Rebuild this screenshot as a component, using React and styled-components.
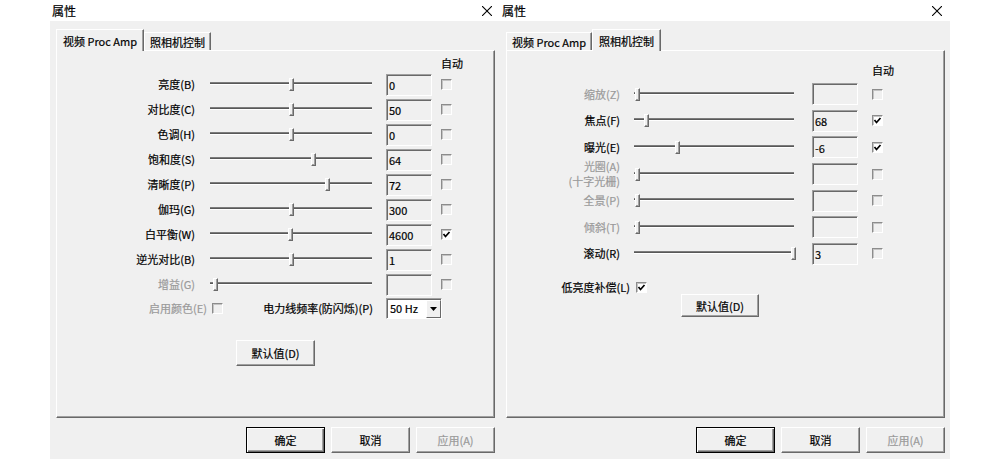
import React from "react";
import styled, { createGlobalStyle } from "styled-components";

const GlobalStyle = createGlobalStyle`
  html, body {
    margin: 0;
    padding: 0;
    background: #fff;
  }
  body {
    font-family: "Noto Sans CJK SC", "Noto Sans", sans-serif;
    font-size: 11px;
    color: #000;
    -webkit-text-stroke: 0.2px currentColor;
  }
`;

const FACE = "#f0f0f0",
  SHADOW = "#a0a0a0",
  DARK = "#696969",
  GRAY_TEXT = "#9a9a9a";

const Page = styled.div`
  display: flex;
  width: 1000px;
  height: 459px;
  padding-left: 50px;
  box-sizing: border-box;
  overflow: hidden;
`,

  Dialog = styled.div`
    width: 450px;
    display: flex;
    flex-direction: column;
  `,

  TitleBar = styled.div`
    height: 21px;
    flex-shrink: 0;
    display: flex;
    align-items: center;
    justify-content: space-between;
    padding: 0 8px 0 2px;
    background: #fff;
    font-size: 12px;
  `,

  Body = styled.div`
    flex: 1;
    background: ${FACE};
    padding: 8px 5px 0 6px;
    display: flex;
    flex-direction: column;
  `,

  TabRow = styled.div`
    display: flex;
    align-items: flex-end;
    height: 21px;
    position: relative;
    z-index: 1;
  `,

  Tab = styled.div`
    box-sizing: border-box;
    height: ${p => (p.$active ? "22px" : "18px")};
    margin-bottom: ${p => (p.$active ? "-1px" : "0")};
    padding: ${p => (p.$active ? "0 6px" : "0 5px")};
    display: flex;
    align-items: center;
    background: ${FACE};
    border-top: 1px solid #fff;
    border-left: 1px solid #fff;
    border-right: 1px solid ${DARK};
    box-shadow: inset -1px 0 ${SHADOW};
    white-space: nowrap;
  `,

  Panel = styled.div`
    box-sizing: border-box;
    height: 368px;
    border: 1px solid;
    border-color: #fff ${DARK} ${DARK} #fff;
    box-shadow: inset -1px -1px ${SHADOW};
    padding-top: ${p => p.$top}px;
  `,

  AutoHeader = styled.div`
    height: ${p => p.$h}px;
    line-height: ${p => p.$h}px;
    padding-left: ${p => p.$left}px;
  `,

  Row = styled.div`
    display: flex;
    align-items: center;
    height: ${p => p.$h}px;
    margin-top: ${p => p.$mt || 0}px;
  `,

  Label = styled.div`
    width: ${p => p.$w}px;
    flex-shrink: 0;
    text-align: right;
    white-space: pre-line;
    line-height: 15px;
    color: ${p => (p.$dim ? GRAY_TEXT : "#000")};
  `,

  SliderBox = styled.div`
    position: relative;
    width: ${p => p.$w}px;
    height: 13px;
    margin-left: ${p => p.$gap}px;
    flex-shrink: 0;
  `,

  Track = styled.div`
    margin-top: 4px;
    height: 3px;
    box-sizing: border-box;
    border-top: 1px solid #7c7c7c;
    border-bottom: 1px solid #fff;
    background: #585858;
  `,

  Thumb = styled.div`
    position: absolute;
    top: 0;
    width: 5px;
    height: 13px;
    box-sizing: border-box;
    background: ${FACE};
    border: 1px solid;
    border-color: #fff ${DARK} ${DARK} #fff;
    box-shadow: inset -1px -1px ${SHADOW};
  `,

  ValueBox = styled.div`
    box-sizing: border-box;
    width: 46px;
    height: 22px;
    margin-left: ${p => p.$gap}px;
    flex-shrink: 0;
    padding: 1px 0 0 2px;
    display: flex;
    align-items: center;
    background: ${FACE};
    border: 1px solid;
    border-color: ${SHADOW} #fff #fff ${SHADOW};
    box-shadow: inset 1px 1px ${DARK};
  `,

  CheckBox = styled.div`
    box-sizing: border-box;
    width: 11px;
    height: 11px;
    margin-left: ${p => p.$gap}px;
    flex-shrink: 0;
    background: ${p => (p.$on ? "#fff" : FACE)};
    border: 1px solid;
    border-color: #8c8c8c #fff #fff #8c8c8c;
    box-shadow: inset 1px 1px #c4c4c4;
    display: flex;
    align-items: center;
    justify-content: center;
  `,

  Select = styled.div`
    box-sizing: border-box;
    width: 56px;
    height: 21px;
    margin-left: ${p => p.$gap}px;
    display: flex;
    background: #fff;
    border: 1px solid;
    border-color: ${SHADOW} #fff #fff ${SHADOW};
    box-shadow: inset 1px 1px ${DARK};
  `,

  SelectText = styled.div`
    flex: 1;
    display: flex;
    align-items: center;
    padding-left: 3px;
  `,

  SelectButton = styled.div`
    box-sizing: border-box;
    width: 15px;
    margin-top: 1px;
    display: flex;
    align-items: center;
    justify-content: center;
    background: ${FACE};
    border: 1px solid;
    border-color: #fff ${DARK} ${DARK} #fff;
  `,

  Button = styled.div`
    box-sizing: border-box;
    width: ${p => p.$w || 79}px;
    height: ${p => p.$h || 26}px;
    margin: ${p => p.$m || "0"};
    display: flex;
    align-items: center;
    justify-content: center;
    background: ${FACE};
    border: 1px solid;
    border-color: ${p => (p.$default ? "#000" : `#fff ${DARK} ${DARK} #fff`)};
    box-shadow: ${p => (p.$default
      ? `inset 1px 1px #fff, inset -1px -1px ${DARK}, inset -2px -2px ${SHADOW}`
      : `inset -1px -1px ${SHADOW}`)};
    color: ${p => (p.$disabled ? GRAY_TEXT : "#000")};
  `,

  ButtonRow = styled.div`
    display: flex;
    justify-content: flex-end;
    gap: 6px;
    margin-top: 9px;
  `;

const CloseIcon = () => (
  <svg width="10" height="10" viewBox="0 0 10 10">
    <path d="M0 0L10 10M10 0L0 10" stroke="#000" strokeWidth="1.1" />
  </svg>
);

const Tick = () => (
  <svg width="9" height="9" viewBox="0 0 9 9">
    <polyline points="1.5,4 3.5,6.5 7.5,2" fill="none" stroke="#000" strokeWidth="1.7" />
  </svg>
);

const Arrow = () => (
  <svg width="7" height="4" viewBox="0 0 7 4">
    <polygon points="0,0 7,0 3.5,4" fill="#000" />
  </svg>
);

// thumb offset follows the control's value as a fraction of the track
const Slider = ({ w, gap, pos }) => (
  <SliderBox $w={w} $gap={gap}>
    <Track />
    <Thumb style={{ left: `${Math.round(pos * w - 2.5)}px` }} />
  </SliderBox>
);

const Check = ({ on, gap }) => (
  <CheckBox $on={on} $gap={gap}>{on && <Tick />}</CheckBox>
);

const Window = ({ active, children }) => (
  <Dialog>
    <TitleBar>
      <span>属性</span>
      <CloseIcon />
    </TitleBar>
    <Body>
      <TabRow>
        <Tab $active={active === 0}>视频 Proc Amp</Tab>
        <Tab $active={active === 1}>照相机控制</Tab>
      </TabRow>
      {children}
      <ButtonRow>
        <Button $default>确定</Button>
        <Button>取消</Button>
        <Button $disabled>应用(A)</Button>
      </ButtonRow>
    </Body>
  </Dialog>
);

const videoRows = [
  { label: "亮度(B)", pos: 0.506, value: "0" },
  { label: "对比度(C)", pos: 0.506, value: "50" },
  { label: "色调(H)", pos: 0.506, value: "0" },
  { label: "饱和度(S)", pos: 0.636, value: "64" },
  { label: "清晰度(P)", pos: 0.728, value: "72" },
  { label: "伽玛(G)", pos: 0.506, value: "300" },
  { label: "白平衡(W)", pos: 0.494, value: "4600", auto: true },
  { label: "逆光对比(B)", pos: 0.506, value: "1" },
  { label: "增益(G)", pos: 0.031, value: "", dim: true },
];

const cameraRows = [
  { label: "缩放(Z)", pos: 0.019, value: "", dim: true },
  { label: "焦点(F)", pos: 0.081, value: "68", auto: true },
  { label: "曝光(E)", pos: 0.269, value: "-6", auto: true },
  { label: "光圈(A)\n(十字光栅)", pos: 0.019, value: "", dim: true },
  { label: "全景(P)", pos: 0.019, value: "", dim: true },
  { label: "倾斜(T)", pos: 0.019, value: "", dim: true },
  { label: "滚动(R)", pos: 0.994, value: "3" },
];

const VideoPanel = () => (
  <Panel $top={3}>
    <AutoHeader $h={18} $left={384}>自动</AutoHeader>
    {videoRows.map(r => (
      <Row key={r.label} $h={25}>
        <Label $w={138} $dim={r.dim}>{r.label}</Label>
        <Slider w={162} gap={15} pos={r.pos} />
        <ValueBox $gap={14}>{r.value}</ValueBox>
        <Check gap={9} on={r.auto} />
      </Row>
    ))}
    <Row $h={22}>
      <Label $w={150} $dim>启用颜色(E)</Label>
      <Check gap={5} />
      <Label $w={150}>电力线频率(防闪烁)(P)</Label>
      <Select $gap={13}>
        <SelectText>50 Hz</SelectText>
        <SelectButton><Arrow /></SelectButton>
      </Select>
    </Row>
    <Button $m="21px 0 0 179px">默认值(D)</Button>
  </Panel>
);

const CameraPanel = () => (
  <Panel $top={8}>
    <AutoHeader $h={22} $left={365}>自动</AutoHeader>
    {cameraRows.map(r => (
      <Row key={r.label} $h={26.6}>
        <Label $w={113} $dim={r.dim}>{r.label}</Label>
        <Slider w={160} gap={14} pos={r.pos} />
        <ValueBox $gap={18}>{r.value}</ValueBox>
        <Check gap={14} on={r.auto} />
      </Row>
    ))}
    <Row $h={14} $mt={13}>
      <Label $w={123}>低亮度补偿(L)</Label>
      <Check gap={6} on />
    </Row>
    <Button $w={78} $h={23} $m="0 0 0 174px">默认值(D)</Button>
  </Panel>
);

const App = () => (
  <>
    <GlobalStyle />
    <Page>
      <Window active={0}>
        <VideoPanel />
      </Window>
      <Window active={1}>
        <CameraPanel />
      </Window>
    </Page>
  </>
);

export default App;
